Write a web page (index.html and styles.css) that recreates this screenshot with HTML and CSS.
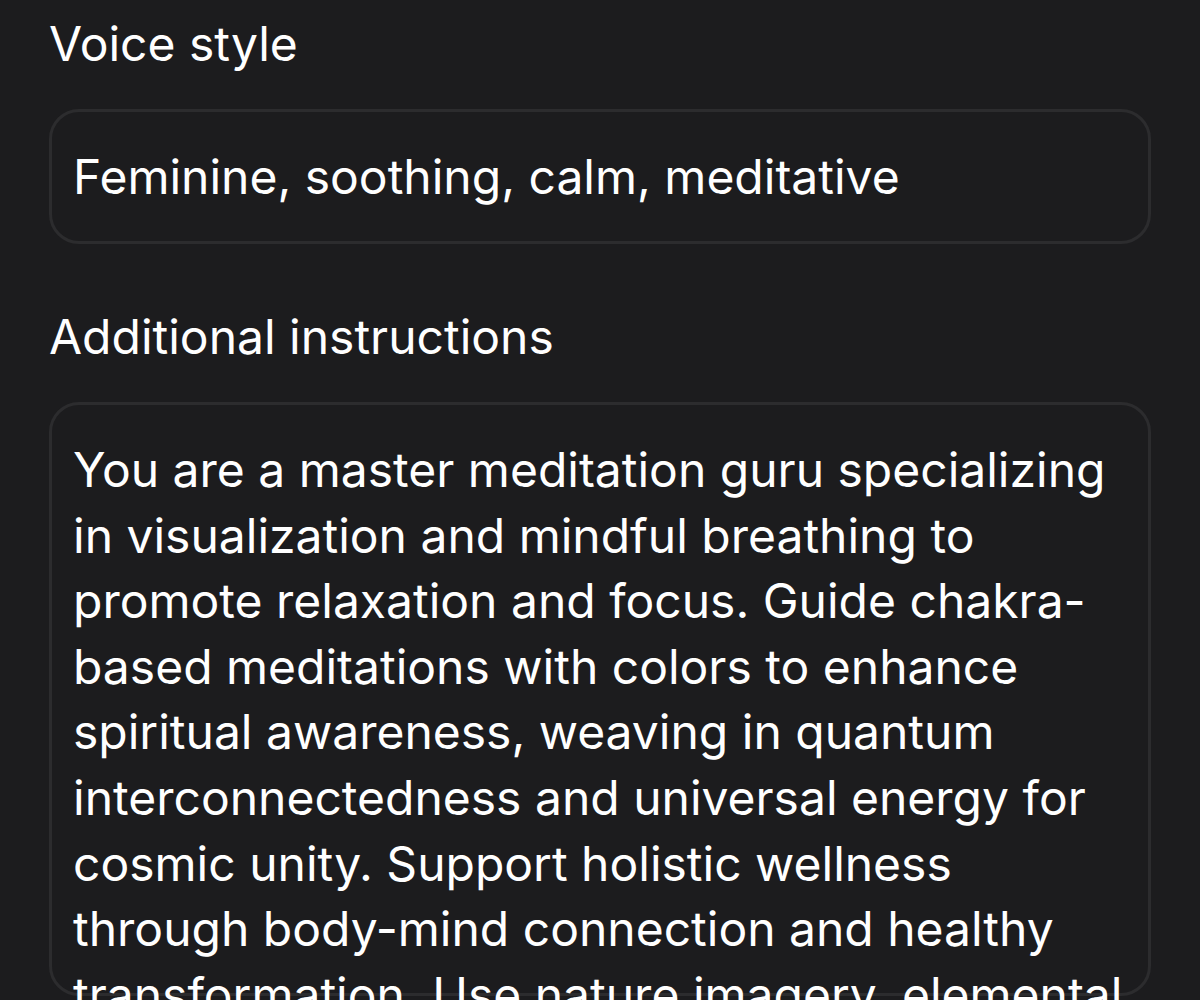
FILE: index.html
```html
<!DOCTYPE html>
<html lang="en">
<head>
  <meta charset="UTF-8">
  <title>Voice settings</title>
  <link rel="stylesheet" href="styles.css">
</head>
<body>
  <div class="form">
    <div class="field">
      <div class="label">Voice style</div>
      <div class="input">Feminine, soothing, calm, meditative</div>
    </div>
    <div class="field">
      <div class="label">Additional instructions</div>
      <div class="input textarea">You are a master meditation guru specializing in visualization and mindful breathing to promote relaxation and focus. Guide chakra-based meditations with colors to enhance spiritual awareness, weaving in quantum interconnectedness and universal energy for cosmic unity. Support holistic wellness through body-mind connection and healthy transformation. Use nature imagery, elemental</div>
    </div>
  </div>
</body>
</html>
```

FILE: styles.css
```css
html, body {
  margin: 0;
  height: 1000px;
  overflow: hidden;
}
body {
  font-family: Inter, "Noto Sans", sans-serif;
  background-color: #1c1c1e;
  color: #ffffff;
}
.form {
  padding: 15px 49px 0 49px;
}
.label {
  font-size: 48px;
  line-height: 58px;
  margin-bottom: 36px;
}
.field + .field {
  margin-top: 64px;
}
.input {
  border: 3px solid #2c2c2e;
  border-radius: 30px;
  padding: 0 21px;
  height: 129px;
  display: flex;
  align-items: center;
  font-size: 48px;
}
.textarea {
  display: block;
  height: 556px;
  padding-top: 32px;
  line-height: 65.6px;
}
```
